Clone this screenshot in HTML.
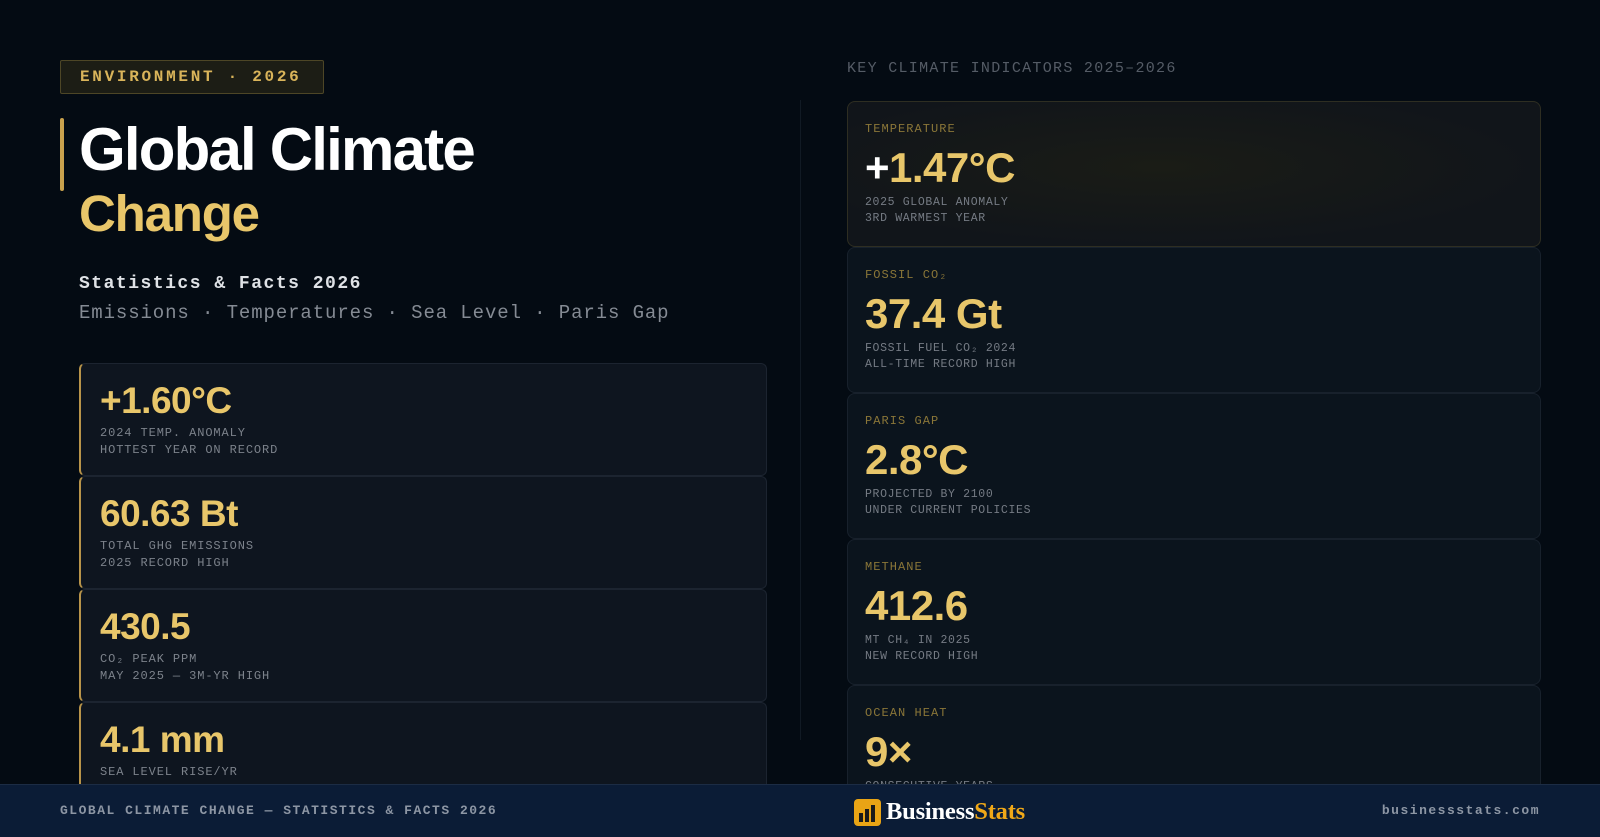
<!DOCTYPE html>
<html><head><meta charset="utf-8"><style>
*{margin:0;padding:0;box-sizing:border-box}
body{width:1600px;height:837px;overflow:hidden;background:#040b13;font-family:"Liberation Sans",sans-serif;position:relative;color:#fff}
.badge{position:absolute;left:60px;top:60px;width:264px;height:34px;border:1px solid #4d4626;background:#1c1d15;border-radius:2px;color:#d9b45a;font:bold 16px "Liberation Mono",monospace;letter-spacing:2.7px;line-height:32px;padding-left:19px}
.bar{position:absolute;left:60px;top:118px;width:4px;height:73px;background:#c9a24d;border-radius:2px}
.t1,.t2{position:absolute;left:79px;font-weight:bold;line-height:64px}
.t1{top:118px;color:#fff;font-size:60px;letter-spacing:-1.8px}
.t2{top:182px;color:#e8c66a;font-size:51px;letter-spacing:-1.2px}
.s1{position:absolute;left:79px;top:274px;font:bold 18px "Liberation Mono",monospace;letter-spacing:1.5px;color:#dfe2e6}
.s2{position:absolute;left:79px;top:302px;font:19px "Liberation Mono",monospace;letter-spacing:0.9px;color:#858b94}
.lc{position:absolute;left:79px;width:688px;height:113px;background:#0e151f;border:1px solid #1c2430;border-left:2px solid #b8944a;border-radius:6px}
.lc .v{position:absolute;left:19px;top:16px;font-size:37px;font-weight:bold;color:#e8c66a;letter-spacing:-.5px}
.lc .l{position:absolute;left:19px;top:61px;font:12px/17px "Liberation Mono",monospace;letter-spacing:0.9px;color:#7c828b}
.div{position:absolute;left:800px;top:100px;width:1px;height:640px;background:#111a24}
.kh{position:absolute;left:847px;top:60px;font:15px "Liberation Mono",monospace;letter-spacing:1.3px;color:#555c66}
.rc{position:absolute;left:847px;width:694px;height:146px;background:#0b141d;border:1px solid #18212c;border-radius:8px}
.rc.first{background:radial-gradient(ellipse at 45% 45%,#1a1c16,#11151a 70%);border-color:#2e2e22}
.rc .k{position:absolute;left:17px;top:20px;font:12px "Liberation Mono",monospace;letter-spacing:1.05px;color:#8a7638}
.rc .v{position:absolute;left:17px;top:42px;font-size:42px;font-weight:bold;color:#e8c66a;letter-spacing:-.5px}
.rc .l{position:absolute;left:17px;top:93px;font:11.5px/16px "Liberation Mono",monospace;letter-spacing:0.65px;color:#757b84}
.foot{position:absolute;left:0;top:784px;width:1600px;height:53px;background:#0b1c36;border-top:1px solid #1c2c44}
.foot .a{position:absolute;left:60px;top:18px;font:bold 13px "Liberation Mono",monospace;letter-spacing:1.5px;color:#8d96a4}
.foot .c{position:absolute;right:60px;top:18px;font:bold 13px "Liberation Mono",monospace;letter-spacing:1.5px;color:#8d96a4}
.logo{position:absolute;left:854px;top:13px;display:flex;align-items:center}
.ic{width:27px;height:27px;background:#e9a415;border-radius:4px;position:relative;margin-right:5px}
.brand{font:bold 24.5px "Liberation Serif",serif;color:#fff;letter-spacing:-.2px}
.brand span{color:#f0a818}
</style></head><body>
<div class="badge">ENVIRONMENT · 2026</div>
<div class="bar"></div>
<div class="t1">Global Climate</div>
<div class="t2">Change</div>
<div class="s1">Statistics &amp; Facts 2026</div>
<div class="s2">Emissions · Temperatures · Sea Level · Paris Gap</div>

<div class="lc" style="top:363px"><div class="v">+1.60°C</div><div class="l">2024 TEMP. ANOMALY<br>HOTTEST YEAR ON RECORD</div></div>
<div class="lc" style="top:476px"><div class="v">60.63 Bt</div><div class="l">TOTAL GHG EMISSIONS<br>2025 RECORD HIGH</div></div>
<div class="lc" style="top:589px"><div class="v">430.5</div><div class="l">CO₂ PEAK PPM<br>MAY 2025 — 3M-YR HIGH</div></div>
<div class="lc" style="top:702px"><div class="v">4.1 mm</div><div class="l">SEA LEVEL RISE/YR</div></div>

<div class="div"></div>
<div class="kh">KEY CLIMATE INDICATORS 2025–2026</div>
<div class="rc first" style="top:101px"><div class="k">TEMPERATURE</div><div class="v"><span style="color:#fff">+</span>1.47°C</div><div class="l">2025 GLOBAL ANOMALY<br>3RD WARMEST YEAR</div></div>
<div class="rc" style="top:247px"><div class="k">FOSSIL CO₂</div><div class="v">37.4 Gt</div><div class="l">FOSSIL FUEL CO₂ 2024<br>ALL-TIME RECORD HIGH</div></div>
<div class="rc" style="top:393px"><div class="k">PARIS GAP</div><div class="v">2.8°C</div><div class="l">PROJECTED BY 2100<br>UNDER CURRENT POLICIES</div></div>
<div class="rc" style="top:539px"><div class="k">METHANE</div><div class="v">412.6</div><div class="l">MT CH₄ IN 2025<br>NEW RECORD HIGH</div></div>
<div class="rc" style="top:685px"><div class="k">OCEAN HEAT</div><div class="v">9×</div><div class="l">CONSECUTIVE YEARS</div></div>

<div class="foot">
<div class="a">GLOBAL CLIMATE CHANGE — STATISTICS &amp; FACTS 2026</div>
<div class="logo"><div class="ic"><svg width="27" height="27" viewBox="0 0 27 27"><rect x="5" y="14" width="4" height="9" fill="#1a1a1a"/><rect x="11" y="10" width="4" height="13" fill="#1a1a1a"/><rect x="17" y="6" width="4" height="17" fill="#1a1a1a"/></svg></div><div class="brand">Business<span>Stats</span></div></div>
<div class="c">businessstats.com</div>
</div>
</body></html>
